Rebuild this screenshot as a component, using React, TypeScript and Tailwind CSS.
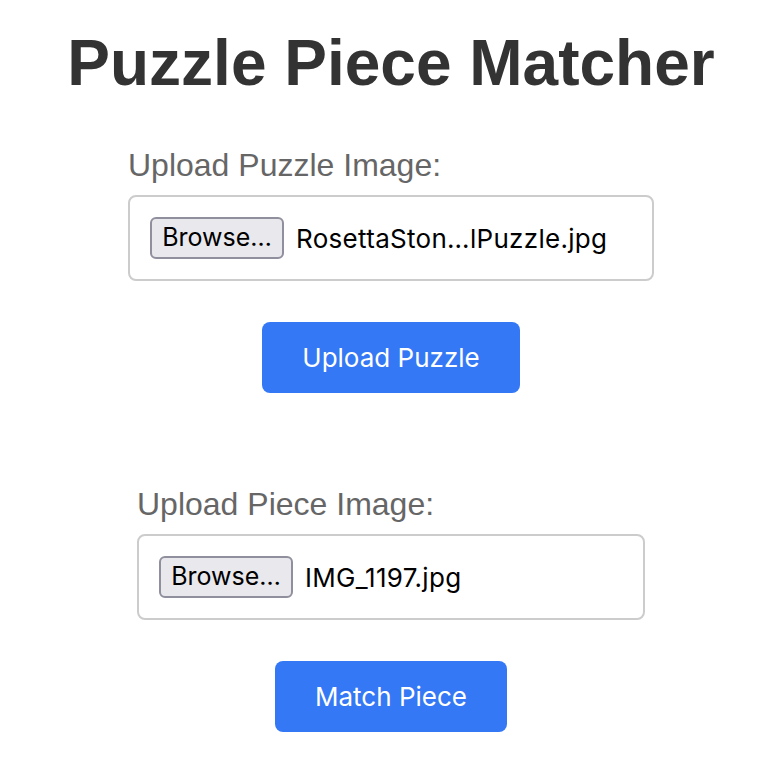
import { useState } from "react";

type Section = {
  label: string;
  fileName: string;
  action: string;
  boxWidth: string;
  buttonWidth: string;
};

const sections: Section[] = [
  {
    label: "Upload Puzzle Image:",
    fileName: "RosettaSton…lPuzzle.jpg",
    action: "Upload Puzzle",
    boxWidth: "w-[526px]",
    buttonWidth: "w-[258px]",
  },
  {
    label: "Upload Piece Image:",
    fileName: "IMG_1197.jpg",
    action: "Match Piece",
    boxWidth: "w-[508px]",
    buttonWidth: "w-[232px]",
  },
];

function FileField({ fileName, width }: { fileName: string; width: string }) {
  return (
    <div
      className={`${width} h-[86px] flex items-center gap-[12px] px-[20px] border-2 border-[#cccccc] rounded-[8px] bg-white`}
    >
      <span className="w-[134px] h-[42px] flex items-center justify-center bg-[#e9e9ed] border-2 border-[#8f8f9d] rounded-[6px] text-[25px] text-black font-['Inter',sans-serif]">
        Browse…
      </span>
      <span className="text-[26px] tracking-[0.3px] text-black font-['Inter',sans-serif] whitespace-nowrap">{fileName}</span>
    </div>
  );
}

export default function App() {
  const [status, setStatus] = useState("");

  return (
    <div className="min-h-[760px] bg-white flex flex-col items-center pl-[2px]">
      <h1 className="mt-[26px] text-[64px] leading-[74px] font-bold text-[#333333] font-['Liberation_Sans',Arial,sans-serif]">
        Puzzle Piece Matcher
      </h1>

      {sections.map((s, i) => (
        <div key={s.label} className={`flex flex-col items-center ${i === 0 ? "mt-[47px]" : "mt-[93px]"}`}>
          <div className={`${s.boxWidth}`}>
            <label className="block text-[32px] leading-[37px] text-[#666666] font-['Liberation_Sans',Arial,sans-serif]">
              {s.label}
            </label>
            <div className="mt-[11px]">
              <FileField fileName={s.fileName} width={s.boxWidth} />
            </div>
          </div>
          <button
            onClick={() => setStatus(s.action)}
            className={`${s.buttonWidth} mt-[41px] h-[71px] rounded-[8px] bg-[#3478f6] text-white text-[26px] font-['Inter',sans-serif]`}
          >
            {s.action}
          </button>
        </div>
      ))}
      <span className="sr-only">{status}</span>
    </div>
  );
}
